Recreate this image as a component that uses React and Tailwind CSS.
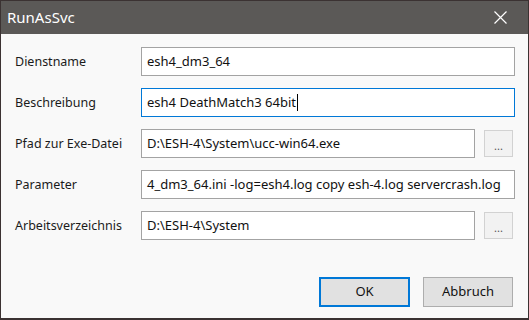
import React from "react";

function Field({ value, focused, cursor }) {
  return (
    <div
      className={`flex-1 min-w-0 h-[29px] bg-white border flex items-center overflow-hidden ${
        focused ? "border-[#0078d7]" : "border-[#a3a3a3]"
      }`}
    >
      <span className="pl-[5px] whitespace-nowrap flex items-center">
        {value}
        {cursor && <span className="inline-block w-px h-[17px] bg-black ml-px" />}
      </span>
    </div>
  );
}

function Row({ label, value, browse, focused, cursor }) {
  return (
    <div className="flex items-center">
      <div className="w-[126px] shrink-0 text-[12.5px] text-[#1b1b1b] pt-px">{label}</div>
      <div className="flex-1 min-w-0 flex items-center text-[13px] text-[#111]">
        <Field value={value} focused={focused} cursor={cursor} />
        {browse && (
          <button className="ml-[9px] mr-[2px] w-[29px] h-[27px] shrink-0 bg-[#f2f2f2] border border-[#d2d2d2] text-[11px] text-[#555] leading-none pt-[4px]">
            ...
          </button>
        )}
      </div>
    </div>
  );
}

export default function App() {
  return (
    <div
      className="w-[529px] h-[320px] bg-[#3b3232] pl-px pt-px pr-px pb-[2px]"
      style={{ fontFamily: '"Noto Sans", "Open Sans", sans-serif' }}
    >
      <div className="h-full flex flex-col bg-[#f9f9f9]">
        <div className="h-[33px] bg-[#5b5957] flex items-center justify-between pl-[6px] pr-[21px]">
          <span className="text-white text-[15px]">RunAsSvc</span>
          <svg width="13" height="13" viewBox="0 0 13 13">
            <path d="M0.5 0.5 L12.5 12.5 M12.5 0.5 L0.5 12.5" stroke="#fff" strokeWidth="1.2" />
          </svg>
        </div>
        <div className="flex flex-col gap-[12px] pt-[13px] pl-[14px] pr-[13px]">
          <Row label="Dienstname" value="esh4_dm3_64" />
          <Row label="Beschreibung" value="esh4 DeathMatch3 64bit" focused cursor />
          <Row label="Pfad zur Exe-Datei" value="D:\ESH-4\System\ucc-win64.exe" browse />
          <Row label="Parameter" value="4_dm3_64.ini -log=esh4.log copy esh-4.log servercrash.log" />
          <Row label="Arbeitsverzeichnis" value="D:\ESH-4\System" browse />
        </div>
        <div className="flex justify-end gap-[13px] pt-[37px] pr-[15px] text-[13px] text-[#111]">
          <button className="w-[91px] h-[30px] bg-[#e1e1e1] border-2 border-[#0078d7]">OK</button>
          <button className="w-[90px] h-[30px] bg-[#e1e1e1] border border-[#adadad]">Abbruch</button>
        </div>
      </div>
    </div>
  );
}
